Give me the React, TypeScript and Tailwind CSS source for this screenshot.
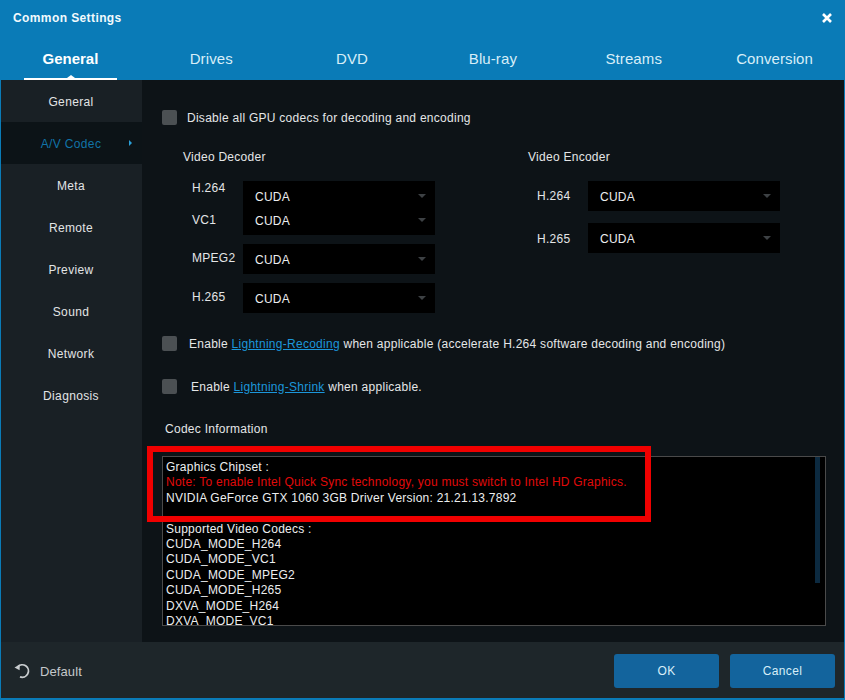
import React from "react";

const font = { fontFamily: '"Liberation Sans", Arial, sans-serif' };

function Tabs() {
  const tabs = ["General", "Drives", "DVD", "Blu-ray", "Streams", "Conversion"];
  return (
    <div className="grid grid-cols-6 h-[44px]">
      {tabs.map((t, i) => (
        <div key={t} className="relative flex justify-center pt-[14px]">
          <span className={i === 0 ? "text-[15px] leading-[18px] font-bold text-white" : "text-[15px] leading-[18px] tracking-[0.1px] text-[#d8eef8]"}>{t}</span>
          {i === 0 && (
            <>
              <div className="absolute bottom-0 left-[24px] w-[93px] h-[2px] bg-white" />
              <div className="absolute bottom-[2px] left-[67px] w-0 h-0 border-l-[4px] border-r-[4px] border-b-[3px] border-l-transparent border-r-transparent border-b-white" />
            </>
          )}
        </div>
      ))}
    </div>
  );
}

function Sidebar() {
  const items = ["General", "A/V Codec", "Meta", "Remote", "Preview", "Sound", "Network", "Diagnosis"];
  return (
    <div className="w-[141px] shrink-0 bg-[#192025]">
      {items.map((t) => {
        const on = t === "A/V Codec";
        return (
          <div key={t} className={on ? "relative h-[42px] flex items-center justify-center pt-[2px] pr-[1px] bg-[#0c1317] text-[#1173a8] text-[12px] tracking-[0.35px]" : "h-[42px] flex items-center justify-center pt-[2px] pr-[1px] text-[#e2e4e5] text-[12px] tracking-[0.35px]"}>
            {t}
            {on && <div className="absolute left-[128px] top-[18px] w-0 h-0 border-t-[3px] border-b-[3px] border-l-[3px] border-t-transparent border-b-transparent border-l-[#2a9fd8]" />}
          </div>
        );
      })}
    </div>
  );
}

function Select({ className }: { className?: string }) {
  return (
    <div className={"flex items-center justify-between pl-[12px] pr-[9px] text-[12px] tracking-[0.27px] text-[#eceeef] " + (className ?? "h-[30px]")}>
      <span className="mt-[2px]">CUDA</span>
      <span className="w-0 h-0 border-l-[4px] border-r-[4px] border-t-[4px] border-l-transparent border-r-transparent border-t-[#3d4144]" />
    </div>
  );
}

function Check() {
  return <span className="block w-[15px] h-[15px] rounded-[2px] bg-[#4b5053] shrink-0" />;
}

const labelCls = "text-[12px] leading-[14px] tracking-[0.27px] text-[#e4e6e7]";
const linkCls = "text-[#1c96da] underline";

function Decoder() {
  return (
    <div className="w-[366px]">
      <div className={labelCls + " pl-[21px] h-[14px]"}>Video Decoder</div>
      <div className="flex pl-[30px] mt-[17px]">
        <div className={labelCls + " w-[51px]"}>
          <div>H.264</div>
          <div className="mt-[18px]">VC1</div>
          <div className="mt-[24px]">MPEG2</div>
          <div className="mt-[25px]">H.265</div>
        </div>
        <div className="w-[192px] flex flex-col gap-[9px]">
          <div className="bg-black h-[54px] flex flex-col pt-[3px]">
            <Select className="h-[24px]" />
            <Select className="h-[24px]" />
          </div>
          <div className="bg-black"><Select /></div>
          <div className="bg-black"><Select /></div>
        </div>
      </div>
    </div>
  );
}

function Encoder() {
  return (
    <div>
      <div className={labelCls + " h-[14px]"}>Video Encoder</div>
      <div className="flex mt-[17px]">
        <div className={labelCls + " w-[60px] pl-[9px]"}>
          <div className="mt-[8px]">H.264</div>
          <div className="mt-[29px]">H.265</div>
        </div>
        <div className="w-[192px] flex flex-col gap-[12px]">
          <div className="bg-black"><Select /></div>
          <div className="bg-black"><Select /></div>
        </div>
      </div>
    </div>
  );
}

function Info() {
  const lines = ["CUDA_MODE_H264", "CUDA_MODE_VC1", "CUDA_MODE_MPEG2", "CUDA_MODE_H265", "DXVA_MODE_H264", "DXVA_MODE_VC1"];
  return (
    <div className="relative mt-[20px] mr-[18px] h-[170px] border border-[#4a4a4a] bg-black overflow-hidden pl-[3px] pt-[3px] text-[12px] leading-[15.4px] tracking-[0.24px] text-[#eceeef]">
      <div>Graphics Chipset :</div>
      <div className="text-[#e00a0a]">Note: To enable Intel Quick Sync technology, you must switch to Intel HD Graphics.</div>
      <div>NVIDIA GeForce GTX 1060 3GB Driver Version: 21.21.13.7892</div>
      <div className="h-[15.4px]" />
      <div>Supported Video Codecs :</div>
      {lines.map((l) => <div key={l}>{l}</div>)}
      <div className="absolute right-[5px] top-0 w-[5px] h-[126px] bg-[#0c2a40]" />
    </div>
  );
}

function Main() {
  return (
    <div className="relative flex-1 min-w-0 bg-[#0d1317] pl-[20px] pt-[29px]">
      <label className="flex items-center h-[16px]">
        <Check />
        <span className={labelCls + " ml-[10px] mt-[1px]"}>Disable all GPU codecs for decoding and encoding</span>
      </label>
      <div className="flex mt-[25px]">
        <Decoder />
        <Encoder />
      </div>
      <label className="flex items-center h-[16px] mt-[22px]">
        <Check />
        <span className={labelCls + " ml-[12px] mt-[1px]"}>Enable <span className={linkCls}>Lightning-Recoding</span> when applicable (accelerate H.264 software decoding and encoding)</span>
      </label>
      <label className="flex items-center h-[16px] mt-[27px]">
        <Check />
        <span className={labelCls + " ml-[14px] mt-[1px]"}>Enable <span className={linkCls}>Lightning-Shrink</span> when applicable.</span>
      </label>
      <div className={labelCls + " pl-[3px] mt-[28px]"}>Codec Information</div>
      <Info />
      <div className="absolute left-[5px] top-[366px] w-[504px] h-[76px] border-[6px] border-[#f00000]" />
    </div>
  );
}

function Footer() {
  return (
    <div className="h-[56px] shrink-0 bg-[#1e262a] flex items-center pl-[12px] pr-[9px] pt-[2px]">
      <svg width="18" height="18" viewBox="0 0 18 18" fill="none" stroke="#c9cdcf" strokeWidth="1.8">
        <path d="M4.5 5 A6.2 6.2 0 1 1 7 14.8" />
        <path d="M1.5 5.5 L6.8 2.6 L6.6 8.2 Z" fill="#c9cdcf" stroke="none" />
      </svg>
      <span className="ml-[9px] mt-[1px] text-[13px] tracking-[0.1px] text-[#c4c8ca]">Default</span>
      <button className="ml-auto w-[105px] h-[34px] rounded-[3px] bg-[#13649d] text-[12px] tracking-[0.35px] text-[#d8eef8]">OK</button>
      <button className="ml-[11px] w-[105px] h-[34px] rounded-[3px] bg-[#13649d] text-[12px] tracking-[0.35px] text-[#d8eef8]">Cancel</button>
    </div>
  );
}

export default function App() {
  return (
    <div style={font} className="w-[845px] h-[700px] bg-[#0a7bb7] flex flex-col overflow-hidden">
      <div className="h-[36px] shrink-0 flex items-center justify-between pl-[13px] pr-[13px]">
        <span className="text-[12px] font-bold tracking-[0.4px] text-[#f2fafd]">Common Settings</span>
        <svg width="10" height="10" viewBox="0 0 10 10" stroke="#ffffff" strokeWidth="2.6"><path d="M1 1 L9 9 M9 1 L1 9" /></svg>
      </div>
      <Tabs />
      <div className="flex-1 min-h-0 flex flex-col mx-px mb-[2px]">
        <div className="flex-1 min-h-0 flex">
          <Sidebar />
          <Main />
        </div>
        <Footer />
      </div>
    </div>
  );
}
